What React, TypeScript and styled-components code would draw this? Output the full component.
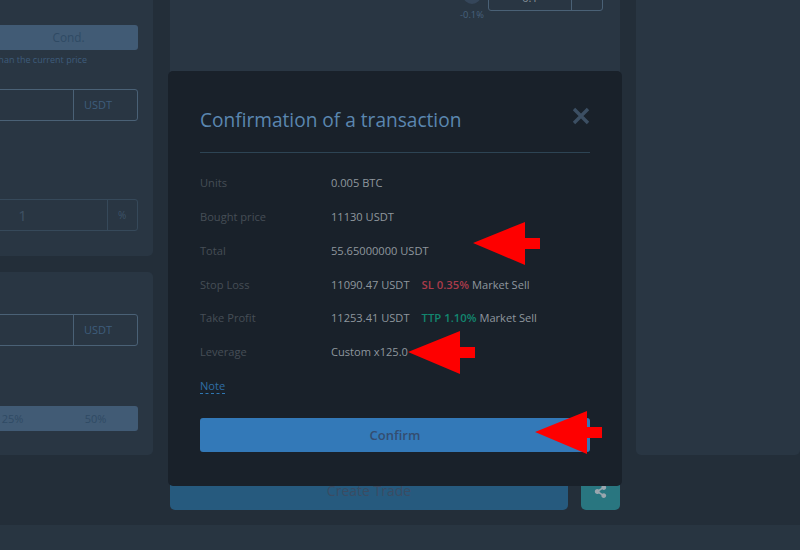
import React from 'react';
import styled, { createGlobalStyle } from 'styled-components';
import { FaShareAlt } from 'react-icons/fa';

const GlobalStyle = createGlobalStyle`
  html, body {
    margin: 0;
    padding: 0;
    background: #232e39;
  }
  * {
    box-sizing: border-box;
  }
`;

const Page = styled.div`
  position: relative;
  width: 800px;
  height: 550px;
  overflow: hidden;
  display: flex;
  flex-direction: column;
  background: #232e39;
  font-family: 'Open Sans', 'Liberation Sans', sans-serif;
`;

// The trading page is scrolled, so its columns start above and left of the window
const Columns = styled.div`
  flex: none;
  display: flex;
  gap: 16px;
  height: 530px;
  margin: -20px 0 15px -147px;
`;

const SideColumn = styled.div`
  flex: none;
  width: 300px;
  margin-right: 1px;
  display: flex;
  flex-direction: column;
  gap: 16px;
`;

const MiddleColumn = styled.div`
  flex: none;
  width: 450px;
  display: flex;
  flex-direction: column;
`;

const Panel = styled.div<{ $height: number; $top: number }>`
  flex: none;
  height: ${p => p.$height}px;
  padding: ${p => p.$top}px 15px 0 0;
  background: #293643;
  border-radius: 5px;
`;

const RightPanel = styled.div`
  width: 300px;
  height: 475px;
  background: #293643;
  border-radius: 5px;
`;

const MiddlePanel = styled.div`
  flex: 1;
  display: flex;
  justify-content: flex-end;
  align-items: flex-start;
  gap: 4px;
  padding: 0 17px 0 0;
  background: #293643;
  border-radius: 5px;
`;

const SliderEnd = styled.div`
  display: flex;
  flex-direction: column;
  align-items: center;
  width: 24px;
  margin-top: 6px;
  font-size: 9.3px;
  line-height: 12px;
  color: #47617c;
`;

const SliderDot = styled.span`
  width: 18px;
  height: 18px;
  margin-bottom: 5px;
  border-radius: 50%;
  background: #35465a;
`;

const InputBox = styled.div<{ $dim?: boolean; $gap?: number }>`
  display: flex;
  height: 32px;
  margin-top: ${p => p.$gap ?? 0}px;
  border: 1px solid ${p => (p.$dim ? '#36495a' : '#4a6176')};
  border-radius: 3px;
`;

const SmallInput = styled(InputBox)`
  width: 115px;
  margin-top: -1px;
`;

const InputValue = styled.div<{ $dim?: boolean }>`
  flex: 1;
  padding-left: ${p => (p.$dim ? 84 : 0)}px;
  text-align: center;
  color: ${p => (p.$dim ? '#3f5163' : '#8a949c')};
  font-size: ${p => (p.$dim ? 15 : 11)}px;
  line-height: 30px;
`;

const SmallValue = styled(InputValue)`
  line-height: 35px;
`;

const Unit = styled.div<{ $width: number; $dim?: boolean }>`
  flex: none;
  width: ${p => p.$width}px;
  padding-left: 10px;
  border-left: 1px solid ${p => (p.$dim ? '#36495a' : '#4a6176')};
  color: ${p => (p.$dim ? '#3d5368' : '#3e5d7c')};
  font-size: ${p => (p.$dim ? 10 : 11)}px;
  line-height: 30px;
`;

const BarTabs = styled.div<{ $gap?: number }>`
  display: flex;
  height: 25px;
  margin-top: ${p => p.$gap ?? 0}px;
  border-radius: 3px;
  background: #415b75;
  color: #2f4a64;
  font-size: 11px;
  line-height: 25px;
`;

const BarTab = styled.span<{ $width: number }>`
  flex: none;
  width: ${p => p.$width}px;
  text-align: center;
`;

const CondTab = styled(BarTab)`
  font-size: 11.8px;
`;

const Hint = styled.div`
  margin: 4px 0 23px;
  padding-right: 51px;
  text-align: right;
  font-size: 9px;
  line-height: 12px;
  color: #3e5c7b;
`;

const ActionRow = styled.div`
  flex: none;
  display: flex;
  gap: 13px;
  height: 36px;
  margin-top: 16px;
`;

const CreateButton = styled.div`
  flex: 1;
  display: flex;
  align-items: flex-end;
  justify-content: center;
  padding-bottom: 9px;
  border-radius: 5px;
  background: #265a7e;
  color: #3a4c63;
  font-size: 14px;
  line-height: 20px;
`;

const ShareButton = styled.div`
  flex: none;
  width: 39px;
  display: flex;
  align-items: flex-end;
  justify-content: center;
  padding-bottom: 12px;
  border-radius: 5px;
  background: #297680;
  color: #9aa6ae;
  font-size: 13px;
`;

const Footer = styled.div`
  flex: 1;
  background: #283541;
`;

const Modal = styled.div`
  position: absolute;
  left: 168px;
  top: 71px;
  width: 454px;
  height: 415px;
  padding: 32px;
  border-radius: 5px;
  background: #19212a;
`;

const ModalHeader = styled.div`
  display: flex;
  justify-content: space-between;
  align-items: center;
  height: 50px;
  padding-bottom: 16px;
  margin-bottom: 12.8px;
  border-bottom: 1px solid #2d4454;
`;

const Title = styled.h2`
  margin: 0;
  font-size: 19.1px;
  font-weight: 400;
  line-height: 34px;
  color: #5b87b0;
`;

const CloseIcon = styled.svg`
  width: 18px;
  height: 18px;
  margin-top: -8px;
`;

const DetailRow = styled.div`
  display: flex;
  align-items: center;
  height: 33.8px;
  font-size: 11.1px;
  color: #8f979e;
`;

const Label = styled.span`
  flex: none;
  width: 131px;
  color: #464e56;
`;

const Tag = styled.span<{ $color: string }>`
  margin: 0 3px 0 12px;
  font-size: 11.3px;
  font-weight: 600;
  color: ${p => p.$color};
`;

const NoteLink = styled.span`
  margin-top: 2px;
  border-bottom: 1px dashed #2f77b3;
  color: #2f6ea5;
  line-height: 14px;
`;

const ConfirmButton = styled.div`
  height: 34px;
  margin-top: 16px;
  border-radius: 3px;
  background: #3379b8;
  color: #344d70;
  font-size: 13px;
  font-weight: 600;
  line-height: 35px;
  text-align: center;
`;

const Arrow = styled.svg<{ $left: number; $top: number }>`
  position: absolute;
  left: ${p => p.$left}px;
  top: ${p => p.$top}px;
  width: 67px;
  height: 44px;
`;

const details = [
  { label: 'Units', value: '0.005 BTC' },
  { label: 'Bought price', value: '11130 USDT' },
  { label: 'Total', value: '55.65000000 USDT' },
  { label: 'Stop Loss', value: '11090.47 USDT', tag: 'SL 0.35%', color: '#a93b4b', rest: 'Market Sell' },
  { label: 'Take Profit', value: '11253.41 USDT', tag: 'TTP 1.10%', color: '#12866f', rest: 'Market Sell' },
  { label: 'Leverage', value: 'Custom x125.0' },
];

const arrows = [
  { left: 473, top: 222 },
  { left: 408, top: 331 },
  { left: 535, top: 411 },
];

const App: React.FC = () => {
  return (
    <Page>
      <GlobalStyle />
      <Columns>
        <SideColumn>
          <Panel $height={276} $top={45}>
            <BarTabs>
              <BarTab $width={144} />
              <CondTab $width={143}>Cond.</CondTab>
            </BarTabs>
            <Hint>than the current price</Hint>
            <InputBox>
              <InputValue />
              <Unit $width={64}>USDT</Unit>
            </InputBox>
            <InputBox $dim $gap={78}>
              <InputValue $dim>1</InputValue>
              <Unit $width={30} $dim>%</Unit>
            </InputBox>
          </Panel>
          <Panel $height={183} $top={42}>
            <InputBox>
              <InputValue />
              <Unit $width={64}>USDT</Unit>
            </InputBox>
            <BarTabs $gap={60}>
              <BarTab $width={118} />
              <BarTab $width={83}>25%</BarTab>
              <BarTab $width={83}>50%</BarTab>
            </BarTabs>
          </Panel>
        </SideColumn>
        <MiddleColumn>
          <MiddlePanel>
            <SliderEnd>
              <SliderDot />
              -0.1%
            </SliderEnd>
            <SmallInput>
              <SmallValue>0.1</SmallValue>
              <Unit $width={31} />
            </SmallInput>
          </MiddlePanel>
          <ActionRow>
            <CreateButton>Create Trade</CreateButton>
            <ShareButton>
              <FaShareAlt />
            </ShareButton>
          </ActionRow>
        </MiddleColumn>
        <RightPanel />
      </Columns>
      <Footer />
      <Modal>
        <ModalHeader>
          <Title>Confirmation of a transaction</Title>
          <CloseIcon viewBox="0 0 18 18">
            <path d="M2 2 L16 16 M16 2 L2 16" stroke="#3c4f63" strokeWidth="3.4" />
          </CloseIcon>
        </ModalHeader>
        {details.map(row => (
          <DetailRow key={row.label}>
            <Label>{row.label}</Label>
            {row.value}
            {row.tag && <Tag $color={row.color}>{row.tag}</Tag>}
            {row.rest}
          </DetailRow>
        ))}
        <DetailRow>
          <NoteLink>Note</NoteLink>
        </DetailRow>
        <ConfirmButton>Confirm</ConfirmButton>
      </Modal>
      {arrows.map(a => (
        <Arrow key={a.left} $left={a.left} $top={a.top} viewBox="0 0 67 44">
          <path d="M0 21 L52 0 V16 H67 V27 H52 V43 Z" fill="#fe0000" />
        </Arrow>
      ))}
    </Page>
  );
};

export default App;
